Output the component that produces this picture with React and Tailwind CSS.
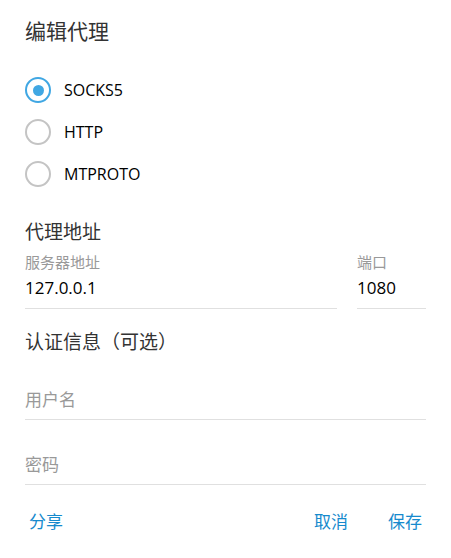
import React from 'react';

const TYPES = ['SOCKS5', 'HTTP', 'MTPROTO'];

function Radio({ label, checked }) {
  return (
    <div className="h-[42px] flex items-center">
      <div
        className={`w-[26px] h-[26px] rounded-full border-2 flex items-center justify-center ${checked ? 'border-[#40a7e3]' : 'border-[#c4c4c4]'}`}
      >
        {checked && <div className="w-[11px] h-[11px] rounded-full bg-[#40a7e3]" />}
      </div>
      <span className="ml-[13px] text-[16px] text-black">{label}</span>
    </div>
  );
}

function Field({ label, value, className = '' }) {
  return (
    <div className={`border-b border-[#e0e0e0] pb-[6px] ${className}`}>
      <div className="h-[20px] mt-[6px] flex items-center text-[15px] text-[#999]">{label}</div>
      <div className="h-[28px] mt-[2px] flex items-center text-[17px] text-black">{value}</div>
    </div>
  );
}

export default function App() {
  return (
    <div className="w-[451px] h-[558px] bg-white px-[25px] flex flex-col font-['Open_Sans','Noto_Sans_CJK_SC',sans-serif]">
      <div className="mt-[12px] h-[40px] flex items-center text-[21px] text-[#333]">编辑代理</div>

      <div className="mt-[17px] flex flex-col">
        {TYPES.map((t, i) => <Radio key={t} label={t} checked={i === 0} />)}
      </div>

      <div className="mt-[23px] h-[28px] flex items-center text-[19px] text-[#333]">代理地址</div>
      <div className="flex gap-[20px]">
        <Field label="服务器地址" value="127.0.0.1" className="flex-1" />
        <Field label="端口" value="1080" className="w-[69px]" />
      </div>

      <div className="mt-[19px] h-[28px] flex items-center text-[19px] text-[#333]">认证信息（可选）</div>

      <div className="mt-[30px] border-b border-[#e0e0e0] pb-[5px]">
        <div className="h-[28px] flex items-center text-[17px] text-[#999]">用户名</div>
      </div>
      <div className="mt-[31px] border-b border-[#e0e0e0] pb-[5px]">
        <div className="h-[28px] flex items-center text-[17px] text-[#999]">密码</div>
      </div>

      <div className="mt-[23px] h-[28px] flex items-center justify-between text-[17px] text-[#168acd]">
        <button className="ml-[4px]">分享</button>
        <div className="flex gap-[40px] mr-[4px]">
          <button>取消</button>
          <button>保存</button>
        </div>
      </div>
    </div>
  );
}
